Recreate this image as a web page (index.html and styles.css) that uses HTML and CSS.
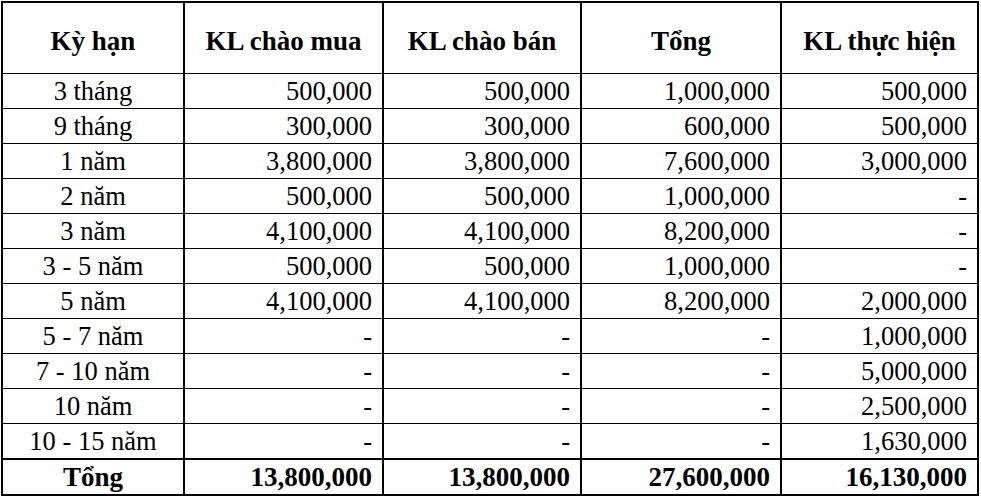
FILE: index.html
```html
<!DOCTYPE html>
<html lang="vi">
<head>
<meta charset="utf-8">
<link rel="stylesheet" href="styles.css">
</head>
<body>
<table class="grid">
  <colgroup>
    <col class="c1"><col class="c2"><col class="c3"><col class="c4"><col class="c5">
  </colgroup>
  <thead>
    <tr class="head">
      <th>Kỳ hạn</th><th>KL chào mua</th><th>KL chào bán</th><th>Tổng</th><th>KL thực hiện</th>
    </tr>
  </thead>
  <tbody>
    <tr><td class="term">3 tháng</td><td>500,000</td><td>500,000</td><td>1,000,000</td><td>500,000</td></tr>
    <tr><td class="term">9 tháng</td><td>300,000</td><td>300,000</td><td>600,000</td><td>500,000</td></tr>
    <tr><td class="term">1 năm</td><td>3,800,000</td><td>3,800,000</td><td>7,600,000</td><td>3,000,000</td></tr>
    <tr><td class="term">2 năm</td><td>500,000</td><td>500,000</td><td>1,000,000</td><td>-</td></tr>
    <tr><td class="term">3 năm</td><td>4,100,000</td><td>4,100,000</td><td>8,200,000</td><td>-</td></tr>
    <tr><td class="term">3 - 5 năm</td><td>500,000</td><td>500,000</td><td>1,000,000</td><td>-</td></tr>
    <tr><td class="term">5 năm</td><td>4,100,000</td><td>4,100,000</td><td>8,200,000</td><td>2,000,000</td></tr>
    <tr><td class="term">5 - 7 năm</td><td>-</td><td>-</td><td>-</td><td>1,000,000</td></tr>
    <tr><td class="term">7 - 10 năm</td><td>-</td><td>-</td><td>-</td><td>5,000,000</td></tr>
    <tr><td class="term">10 năm</td><td>-</td><td>-</td><td>-</td><td>2,500,000</td></tr>
    <tr><td class="term">10 - 15 năm</td><td>-</td><td>-</td><td>-</td><td>1,630,000</td></tr>
  </tbody>
  <tfoot>
    <tr class="total">
      <td class="term">Tổng</td><td>13,800,000</td><td>13,800,000</td><td>27,600,000</td><td>16,130,000</td>
    </tr>
  </tfoot>
</table>
</body>
</html>
```
FILE: styles.css
```css
html, body {
  margin: 0;
  padding: 0;
  background: #fff;
}
body {
  font-family: "Liberation Serif", Tinos, "Times New Roman", serif;
  font-size: 26.5px;
  color: #000;
}
.grid {
  margin: 1px 0 0 1px;
  border-collapse: collapse;
  table-layout: fixed;
  width: 978px;
  border: 2px solid #000;
}
.c1 { width: 182px; }
.c2 { width: 199px; }
.c3 { width: 198px; }
.c4 { width: 200px; }
.c5 { width: 197px; }
.grid th, .grid td {
  border-left: 2px solid #000;
  border-right: 2px solid #000;
  border-top: 1px solid #000;
  border-bottom: 1px solid #000;
  padding: 0 10px 0 4px;
  line-height: 34px;
  height: 34px;
  text-align: right;
  white-space: nowrap;
  vertical-align: middle;
}
.grid th {
  font-weight: bold;
  font-size: 27px;
  text-align: center;
  height: 65px;
  padding: 5px 4px 0 4px;
  border-top: 2px solid #000;
}
.grid td.term {
  text-align: center;
  padding: 0 4px;
}
.total td {
  font-weight: bold;
  font-size: 27px;
  border-top: 2px solid #000;
  border-bottom: 2px solid #000;
  height: 34px;
}
```
